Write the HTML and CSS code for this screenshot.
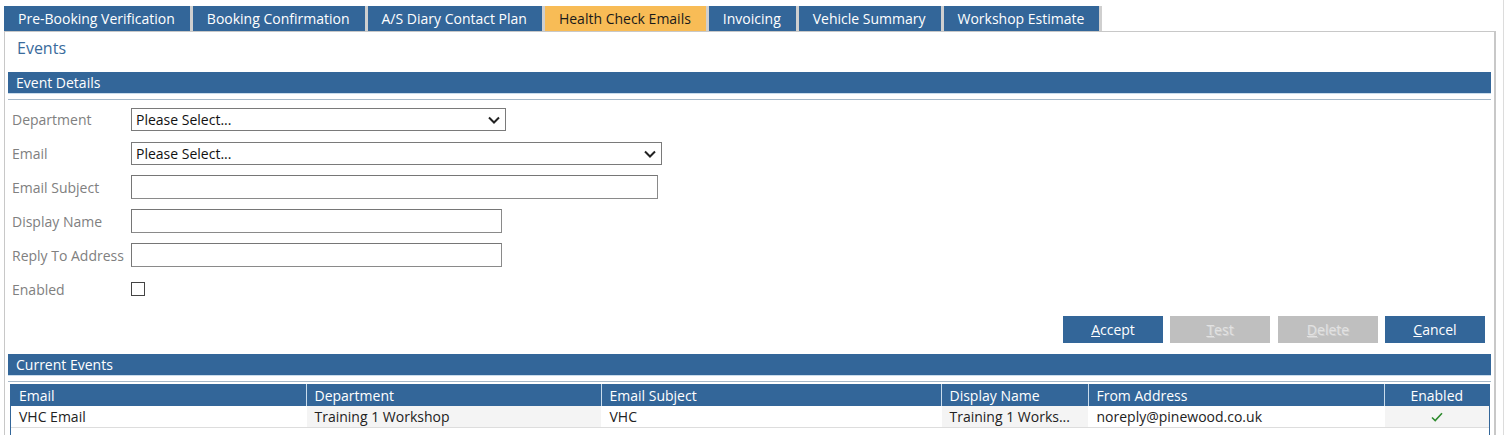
FILE: index.html
```html
<!DOCTYPE html>
<html>
<head>
    <meta charset="UTF-8">
    <title>Health Check Emails</title>
    <link rel="stylesheet" href="styles.css">
</head>
<body>
    <div class="page">
        <div class="tabs">
            <div class="tab">Pre-Booking Verification</div>
            <div class="tab">Booking Confirmation</div>
            <div class="tab">A/S Diary Contact Plan</div>
            <div class="tab active">Health Check Emails</div>
            <div class="tab">Invoicing</div>
            <div class="tab">Vehicle Summary</div>
            <div class="tab">Workshop Estimate</div>
        </div>
        <div class="panel">
            <div class="panel-title">Events</div>

            <div class="section-bar">Event Details</div>
            <div class="section-rule"></div>

            <div class="form">
                <div class="form-row">
                    <label for="department">Department</label>
                    <div class="select-wrap dept">
                        <select id="department"><option>Please Select...</option></select>
                        <svg class="chevron" width="12" height="8" viewBox="0 0 12 8"><path d="M1 1.5 L6 6.5 L11 1.5" fill="none" stroke="#222" stroke-width="2"/></svg>
                    </div>
                </div>
                <div class="form-row">
                    <label for="email">Email</label>
                    <div class="select-wrap email">
                        <select id="email"><option>Please Select...</option></select>
                        <svg class="chevron" width="12" height="8" viewBox="0 0 12 8"><path d="M1 1.5 L6 6.5 L11 1.5" fill="none" stroke="#222" stroke-width="2"/></svg>
                    </div>
                </div>
                <div class="form-row">
                    <label for="subject">Email Subject</label>
                    <input type="text" id="subject" class="field wide">
                </div>
                <div class="form-row">
                    <label for="displayName">Display Name</label>
                    <input type="text" id="displayName" class="field">
                </div>
                <div class="form-row">
                    <label for="replyTo">Reply To Address</label>
                    <input type="text" id="replyTo" class="field">
                </div>
                <div class="form-row">
                    <label for="enabled">Enabled</label>
                    <input type="checkbox" id="enabled" class="check">
                </div>
            </div>

            <div class="actions">
                <button class="btn"><u>A</u>ccept</button>
                <button class="btn" disabled><u>T</u>est</button>
                <button class="btn" disabled><u>D</u>elete</button>
                <button class="btn"><u>C</u>ancel</button>
            </div>

            <div class="section-bar">Current Events</div>
            <div class="section-rule"></div>

            <div class="grid">
                <table>
                    <colgroup>
                        <col style="width: 295px">
                        <col style="width: 295px">
                        <col style="width: 340px">
                        <col style="width: 147px">
                        <col style="width: 296px">
                        <col>
                    </colgroup>
                    <thead>
                        <tr>
                            <th>Email</th>
                            <th>Department</th>
                            <th>Email Subject</th>
                            <th>Display Name</th>
                            <th>From Address</th>
                            <th class="center">Enabled</th>
                        </tr>
                    </thead>
                    <tbody>
                        <tr>
                            <td>VHC Email</td>
                            <td class="alt">Training 1 Workshop</td>
                            <td>VHC</td>
                            <td class="alt">Training 1 Works...</td>
                            <td>noreply@pinewood.co.uk</td>
                            <td class="alt center">
                                <svg width="12" height="10" viewBox="0 0 12 10"><path d="M1 5.5 L4.2 8.5 L11 1.2" fill="none" stroke="#2e8b2e" stroke-width="1.6"/></svg>
                            </td>
                        </tr>
                    </tbody>
                </table>
            </div>
        </div>
    </div>
</body>
</html>
```

FILE: styles.css
```css
body {
    margin: 0;
    font-family: "Open Sans", Arial, sans-serif;
    font-size: 14px;
    color: #222;
    background-color: white;
    overflow: hidden;
}
.page {
    width: 1504px;
    height: 435px;
    box-sizing: border-box;
    padding: 6px 7px 0 4px;
    border-right: 1px solid #dcdcdc;
}
.tabs {
    display: flex;
}
.tab {
    height: 25px;
    line-height: 25px;
    padding: 0 15px 0 14px;
    background-color: #336699;
    color: white;
    border-right: 3px solid #cfcfcf;
    white-space: nowrap;
}
.tab.active {
    background-color: #f8bc56;
    color: #1a1a1a;
}
.panel {
    border: 1px solid #c8c8c8;
    border-right-width: 2px;
    padding: 0 3px;
    height: 420px;
}
.panel-title {
    padding: 6px 0 0 9px;
    line-height: 20px;
    height: 20px;
    margin-bottom: 14px;
    font-size: 16px;
    color: #3a6b9c;
}
.section-bar {
    height: 21px;
    line-height: 21px;
    padding-left: 8px;
    background-color: #336699;
    color: white;
    border-bottom: 1px solid #c9dcec;
}
.section-rule {
    margin-top: 5px;
    height: 1px;
    background-color: #a6b8c8;
}
.form {
    padding: 2px 0 0 4px;
}
.form-row {
    display: flex;
    align-items: center;
    height: 34px;
}
.form-row label {
    width: 119px;
    color: #808080;
    white-space: nowrap;
}
.select-wrap {
    position: relative;
    height: 23px;
}
.select-wrap.dept {
    width: 375px;
}
.select-wrap.email {
    width: 531px;
}
.select-wrap select {
    appearance: none;
    -webkit-appearance: none;
    width: 100%;
    height: 100%;
    margin: 0;
    padding: 0 24px 0 4px;
    border: 1px solid #7a7a7a;
    border-radius: 0;
    background-color: white;
    font-family: inherit;
    font-size: 14px;
    color: #111;
}
.chevron {
    position: absolute;
    right: 6px;
    top: 8px;
    pointer-events: none;
}
.field {
    width: 371px;
    height: 24px;
    margin: 0;
    box-sizing: border-box;
    border: 1px solid #8a8a8a;
    border-top-color: #767676;
    border-left-color: #767676;
    border-radius: 0;
    padding: 0 4px;
    font-family: inherit;
    font-size: 14px;
}
.field.wide {
    width: 527px;
}
.check {
    appearance: none;
    -webkit-appearance: none;
    width: 14px;
    height: 14px;
    margin: 0;
    border: 1px solid #444;
    background-color: white;
    box-sizing: border-box;
}
.actions {
    display: flex;
    justify-content: flex-end;
    gap: 7px;
    margin: 10px 6px 11px 0;
}
.btn {
    width: 100px;
    height: 27px;
    border: none;
    border-radius: 0;
    background-color: #336699;
    color: white;
    font-family: inherit;
    font-size: 14px;
    cursor: pointer;
}
.btn:nth-child(3) {
    margin-left: 1px;
}
.btn:disabled {
    background-color: #bfbfbf;
    color: #e2e2e2;
    text-shadow: 1px 1px 0 #d0d0d0;
    cursor: default;
}
.grid {
    margin: 2px 1px 0 2px;
    height: 60px;
    border-left: 1px solid #336699;
    border-right: 1px solid #336699;
}
table {
    width: 100%;
    border-collapse: collapse;
    table-layout: fixed;
}
th {
    height: 22px;
    padding: 0 8px;
    background-color: #336699;
    color: white;
    font-weight: normal;
    text-align: left;
    border-left: 1px solid #c9dcec;
    white-space: nowrap;
}
th:first-child {
    border-left: none;
}
td {
    height: 21px;
    padding: 0 8px;
    border-left: 1px solid white;
    border-bottom: 1px solid #dddddd;
    white-space: nowrap;
    overflow: hidden;
}
td:first-child {
    border-left: none;
}
td.alt {
    background-color: #f4f4f4;
}
.center {
    text-align: center;
}
```
